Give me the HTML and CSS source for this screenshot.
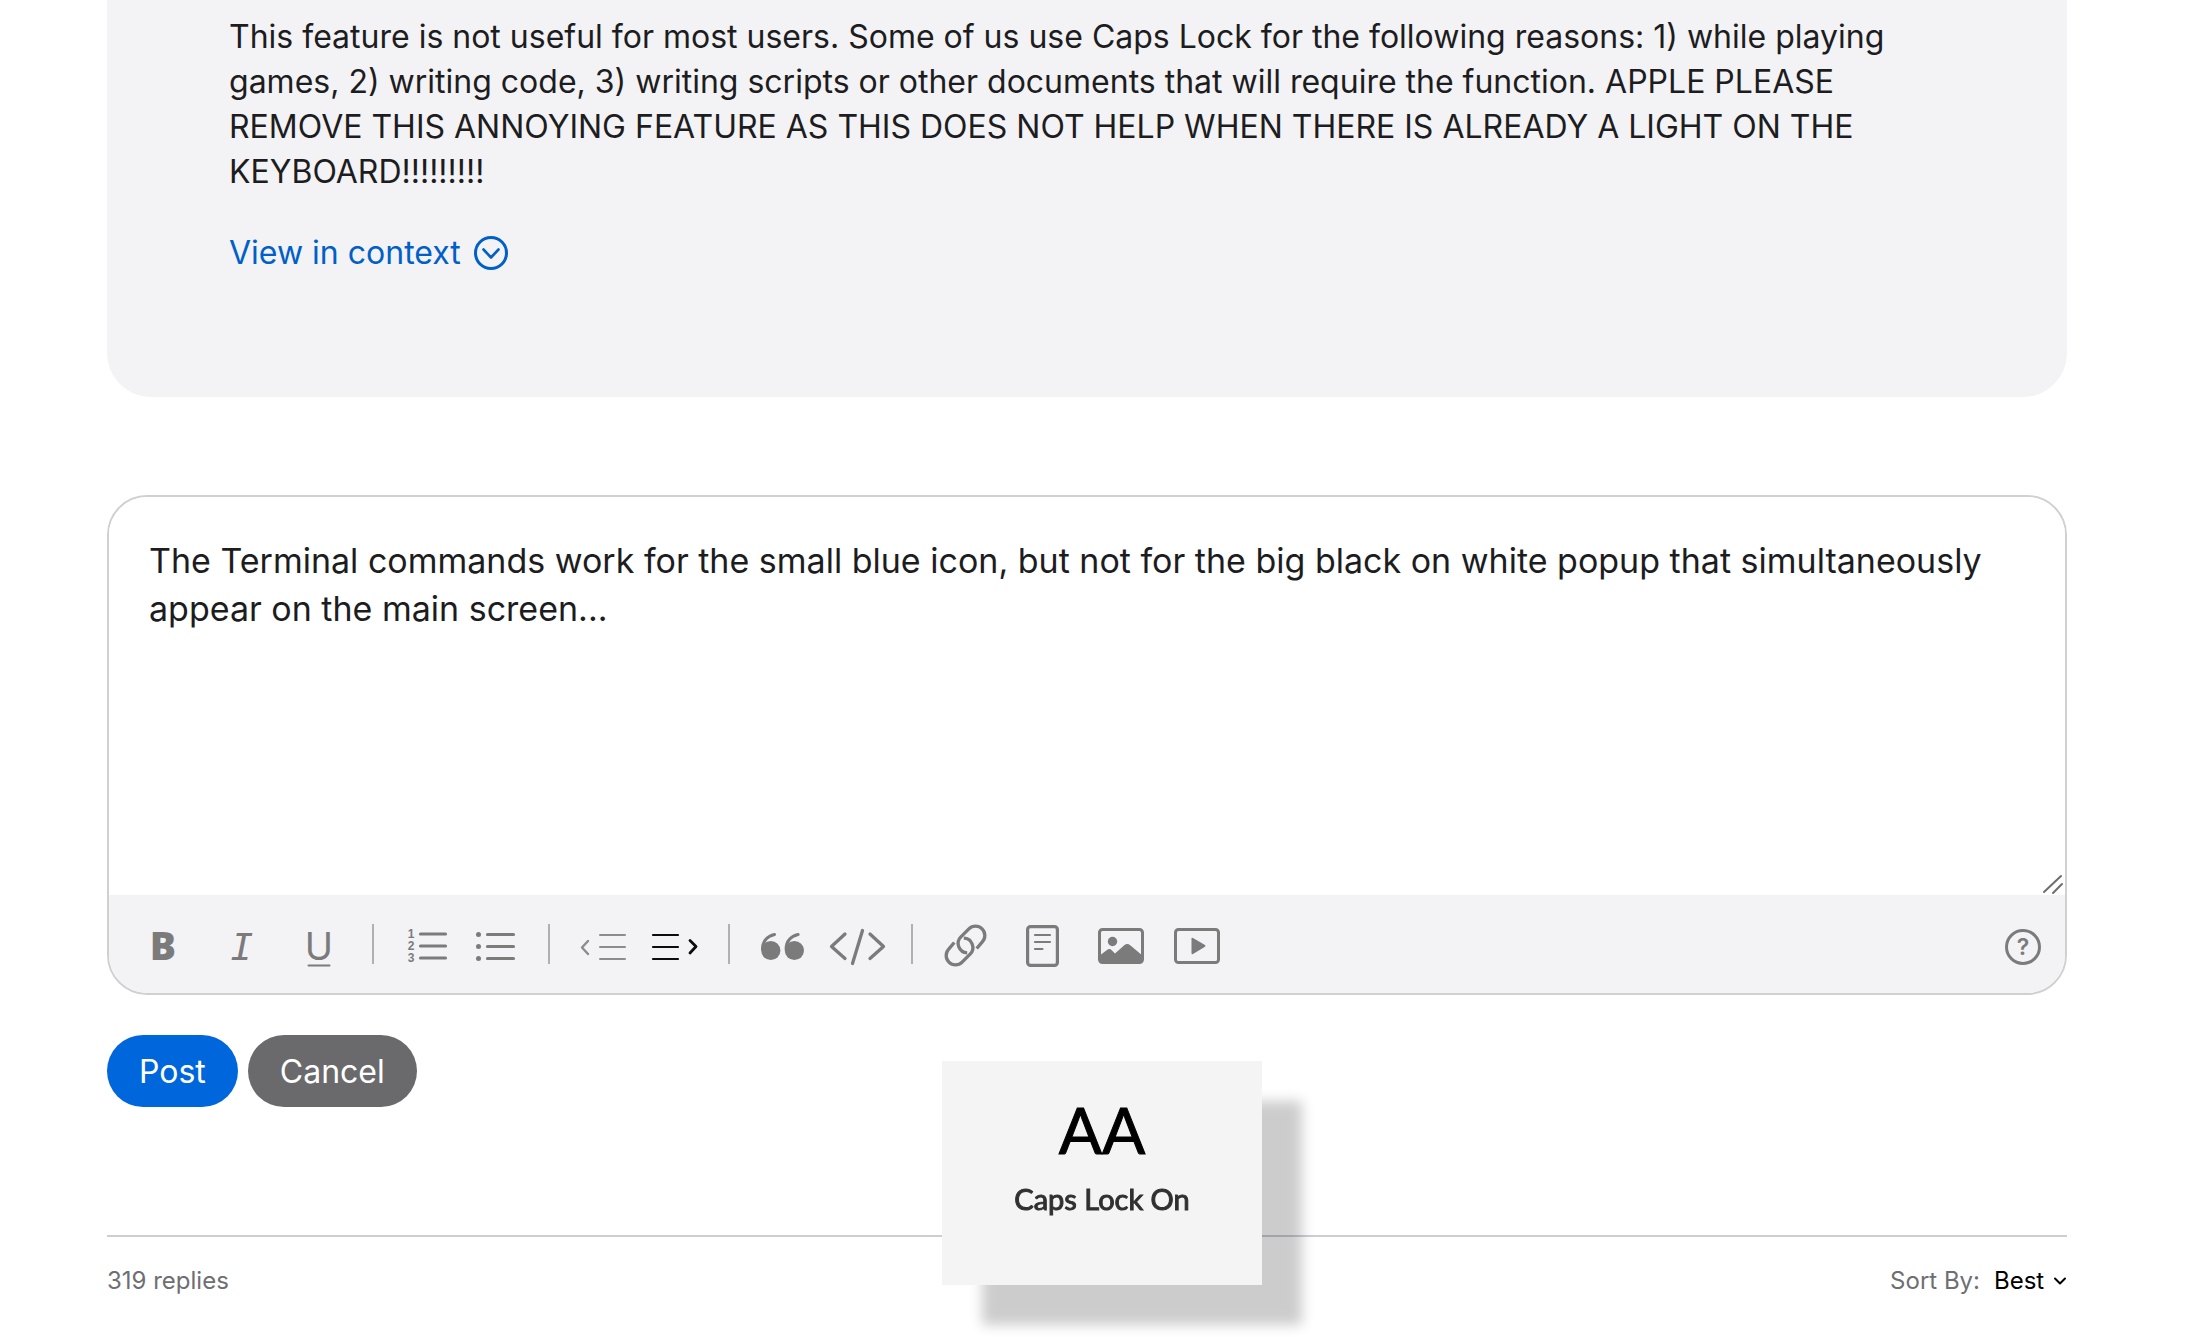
FILE: index.html
```
<!DOCTYPE html>
<html lang="en">
<head>
    <meta charset="UTF-8">
    <meta name="viewport" content="width=device-width, initial-scale=1.0">
    <title>Reply</title>
    <link rel="stylesheet" href="styles.css">
</head>
<body>
    <main class="page">
        <!-- quoted post -->
        <section class="post">
            <p class="post-text">This feature is not useful for most users. Some of us use Caps Lock for the following reasons: 1) while playing games, 2) writing code, 3) writing scripts or other documents that will require the function. APPLE PLEASE REMOVE THIS ANNOYING FEATURE AS THIS DOES NOT HELP WHEN THERE IS ALREADY A LIGHT ON THE KEYBOARD!!!!!!!!!</p>
            <a class="context-link" href="#context">View in context
                <svg width="34" height="34" viewBox="0 0 34 34">
                    <circle cx="17" cy="17" r="15.5" stroke-width="3"/>
                    <path d="M9.5 13.5l7.5 8 7.5-8" stroke-width="2.6"/>
                </svg>
            </a>
        </section>

        <form class="reply-form">
            <div class="editor">
                <div class="editor-area">
                    <textarea class="editor-input" aria-label="Reply">The Terminal commands work for the small blue icon, but not for the big black on white popup that simultaneously appear on the main screen...</textarea>
                    <svg class="grip" width="22" height="22" viewBox="0 0 22 22">
                        <path d="M2 19L19 3M11 20l9-9"/>
                    </svg>
                </div>

                <div class="toolbar">
                    <div class="tools wide">
                        <button type="button" class="tool" aria-label="Bold">
                            <svg viewBox="0 0 48 48"><text class="icon-bold" x="22" y="40">B</text></svg>
                        </button>
                        <button type="button" class="tool" aria-label="Italic">
                            <svg viewBox="0 0 48 48"><text class="icon-italic" x="24" y="40">I</text></svg>
                        </button>
                        <button type="button" class="tool" aria-label="Underline">
                            <svg viewBox="0 0 48 48"><text class="icon-underline" x="24" y="40">U</text><path d="M13.500 45.500h21" stroke-width="2"/></svg>
                        </button>
                    </div>
                    <span class="separator"></span>
                    <div class="tools narrow">
                        <button type="button" class="tool" aria-label="Numbered list">
                            <svg viewBox="0 0 48 48">
                                <text class="icon-number" x="8" y="18">1</text>
                                <text class="icon-number" x="8" y="30">2</text>
                                <text class="icon-number" x="8" y="42">3</text>
                                <path d="M17.500 14h25M17.500 26h25M17.500 38h25" stroke-width="3.2"/>
                            </svg>
                        </button>
                        <button type="button" class="tool" aria-label="Bulleted list">
                            <svg viewBox="0 0 48 48">
                                <g class="solid"><circle cx="7.500" cy="14.500" r="2.500"/><circle cx="7.500" cy="26.500" r="2.500"/><circle cx="7.500" cy="38.500" r="2.500"/></g>
                                <path d="M16.500 14.500h26M16.500 26.500h26M16.500 38.500h26" stroke-width="3.2"/>
                            </svg>
                        </button>
                    </div>
                    <span class="separator"></span>
                    <div class="tools">
                        <button type="button" class="tool muted" aria-label="Outdent">
                            <svg viewBox="0 0 48 48"><path d="M21 15h25M21 27h25M21 39h25" stroke-width="2"/><path d="M9 21l-6 6.500 6 6.500" stroke-width="2.4"/></svg>
                        </button>
                        <button type="button" class="tool dark" aria-label="Indent">
                            <svg viewBox="0 0 48 48"><path d="M2 15h25M2 27h25M2 39h25" stroke-width="2.2"/><path d="M39 20.500l6 6-6 6.500" stroke-width="2.8"/></svg>
                        </button>
                    </div>
                    <span class="separator"></span>
                    <div class="tools medium">
                        <button type="button" class="tool" aria-label="Quote">
                            <svg viewBox="0 0 48 48">
                                <g class="solid"><circle cx="11.800" cy="30.500" r="9.600"/><circle cx="35.400" cy="30.500" r="9.600"/></g>
                                <path d="M3.500 29c0-8 5-13 12-14.500M27.100 29c0-8 5-13 12-14.500" stroke-width="3"/>
                            </svg>
                        </button>
                        <button type="button" class="tool" aria-label="Code">
                            <svg viewBox="0 0 48 48"><path d="M11 14L-2.500 26.500 11 38.500M28.500 10.500L18.500 43.500M36 14l13.500 12.500L36 38.500" stroke-width="3.300"/></svg>
                        </button>
                    </div>
                    <span class="separator"></span>
                    <div class="tools wide">
                        <button type="button" class="tool" aria-label="Link">
                            <svg viewBox="0 0 48 48"><g stroke-linecap="butt" stroke-width="3.300"><path d="M34.700 28.500l5.400-6.400A9.300 9.300 0 0 0 26.900 8.900l-8 8A9.300 9.300 0 0 0 25.200 32.800"/><path d="M12.300 22.500l-5.400 6.400A9.300 9.300 0 0 0 20.100 42.100l8-8A9.300 9.300 0 0 0 21.800 18.200"/></g></svg>
                        </button>
                        <button type="button" class="tool" aria-label="Document">
                            <svg viewBox="0 0 48 48"><rect x="8.600" y="6.600" width="29.800" height="38.800" rx="3" stroke-width="3.200"/><path d="M16 15h15M16 22h15M16 29h7.500" stroke-width="2.200"/></svg>
                        </button>
                        <button type="button" class="tool" aria-label="Image">
                            <svg viewBox="0 0 48 48"><rect x="3.500" y="9.500" width="43" height="33" rx="3" stroke-width="3"/><g class="solid"><circle cx="16.500" cy="21.500" r="4.700"/><path d="M3 36l8-6q2.500-2 5 0.500l3 3 9.500-8.500q3-2 6 0.500L47 36v5q0 2-2 2H5q-2 0-2-2z"/></g></svg>
                        </button>
                        <button type="button" class="tool" aria-label="Video">
                            <svg viewBox="0 0 48 48"><rect x="2.500" y="9.500" width="43" height="33" rx="3" stroke-width="3"/><path class="solid" d="M18.500 18.500q0.500-1 1.500-0.500l12 7q1 0.800 0 1.800l-12 7.200q-1 0.500-1.500-0.500z"/></svg>
                        </button>
                    </div>
                    <button type="button" class="tool help" aria-label="Help">
                        <svg viewBox="0 0 48 48"><circle cx="24" cy="27" r="16.500" stroke-width="3"/><text class="icon-help" x="24" y="35">?</text></svg>
                    </button>
                </div>
            </div>

            <div class="actions">
                <button type="submit" class="btn btn-post">Post</button>
                <button type="button" class="btn btn-cancel">Cancel</button>
            </div>
        </form>

        <!-- replies header -->
        <div class="replies-bar">
            <span>319 replies</span>
            <div class="sort">
                <label for="sort">Sort By:</label>
                <select id="sort" class="sort-select">
                    <option>Best</option>
                </select>
                <svg width="14" height="10" viewBox="0 0 14 10"><path d="M2 2.500l5 5 5-5"/></svg>
            </div>
        </div>
    </main>

    <div class="caps-popup" role="status">
        <span class="caps-icon">AA</span>
        <span class="caps-label">Caps Lock On</span>
    </div>
</body>
</html>
```

FILE: styles.css
```
* {
    box-sizing: border-box;
}

body {
    margin: 0;
    background-color: #fff;
    color: #1d1d1f;
    font-family: Inter, "Liberation Sans", sans-serif;
}

svg {
    display: block;
    fill: none;
    stroke: currentColor;
    stroke-linecap: round;
    stroke-linejoin: round;
}

.page {
    padding: 0 139px 0 107px;
}

/* quoted post */
.post {
    padding: 14px 122px 122px;
    background-color: #f3f3f5;
    border-radius: 0 0 44px 44px;
}

.post-text {
    margin: 0 0 36px;
    font-size: 32px;
    line-height: 45px;
}

.context-link {
    display: inline-flex;
    align-items: center;
    gap: 13px;
    color: #0060c8;
    font-size: 32px;
    line-height: 45px;
    text-decoration: none;
}

/* editor */
.editor {
    margin-top: 98px;
    border: 2px solid #d0d0d1;
    border-radius: 40px;
    overflow: hidden;
}

.editor-area {
    position: relative;
}

.editor-input {
    display: block;
    width: 100%;
    height: 398px;
    padding: 40px 60px 40px 40px;
    border: none;
    outline: none;
    resize: none;
    background-color: #fff;
    color: #1d1d1f;
    font-family: inherit;
    font-size: 34px;
    line-height: 48px;
}

.grip {
    position: absolute;
    right: 1px;
    bottom: 0;
    color: #6e6e70;
    stroke-width: 2;
}

.toolbar {
    display: flex;
    align-items: center;
    height: 98px;
    padding: 0 18px 0 32px;
    background-color: #f3f3f5;
    color: #7b7b7c;
}

.tools {
    display: flex;
    gap: 24px;
}

.tools.wide {
    gap: 29px;
}

.tools.medium {
    gap: 27px;
}

.tools.narrow {
    gap: 20px;
}

.tool {
    width: 48px;
    height: 48px;
    padding: 0;
    border: none;
    background: none;
    color: inherit;
    cursor: pointer;
}

.tool svg {
    width: 48px;
    height: 48px;
    overflow: visible;
}

.tool.muted {
    color: #8c8c8e;
}

.tool.dark {
    color: #0c0c0e;
}

.tool text {
    fill: currentColor;
    stroke: none;
    text-anchor: middle;
}

.solid {
    fill: currentColor;
    stroke: none;
}

.icon-bold {
    font: 800 39px "Open Sans", sans-serif;
}

.icon-italic {
    font: italic 38px "DejaVu Sans Mono", monospace;
}

.icon-underline {
    font: 400 38px Inter, sans-serif;
}

.icon-number {
    font: 700 12px "Liberation Sans", sans-serif;
}

.icon-help {
    font: 600 23px Inter, sans-serif;
}

.separator {
    width: 2px;
    height: 40px;
    margin: 0 29px;
    background-color: #b0b0b2;
}

.help {
    margin-left: auto;
}

/* buttons */
.actions {
    display: flex;
    gap: 10px;
    margin-top: 40px;
}

.btn {
    height: 72px;
    padding: 0 32px;
    border: none;
    border-radius: 36px;
    color: #fff;
    font-family: inherit;
    font-size: 32px;
    cursor: pointer;
}

.btn-post {
    background-color: #0066dc;
}

.btn-cancel {
    background-color: #6a6a6c;
}

/* replies header */
.replies-bar {
    display: flex;
    justify-content: space-between;
    margin-top: 128px;
    padding-top: 28px;
    border-top: 2px solid #cdcdd3;
    color: #6e6e73;
    font-size: 24px;
    line-height: 32px;
}

.sort {
    display: flex;
    align-items: center;
}

.sort-select {
    margin: 0 8px 0 14px;
    padding: 0;
    border: none;
    outline: none;
    appearance: none;
    background: none;
    color: #000;
    font: inherit;
}

.sort svg {
    color: #000;
    stroke-width: 2;
}

/* caps lock popup */
.caps-popup {
    position: fixed;
    bottom: 55px;
    left: 50%;
    display: flex;
    flex-direction: column;
    align-items: center;
    width: 320px;
    height: 224px;
    margin-left: -161px;
    padding-top: 33px;
    background-color: #f4f4f4;
    box-shadow: 40px 40px 12px rgba(0, 0, 0, 0.2);
    font-family: Lato, sans-serif;
}

.caps-icon {
    color: #000;
    font-size: 64px;
    line-height: 72px;
    -webkit-text-stroke: 1px #000;
}

.caps-label {
    margin-top: 15px;
    color: #303030;
    font-size: 29px;
    line-height: 36px;
    -webkit-text-stroke: 1px #303030;
}
```
